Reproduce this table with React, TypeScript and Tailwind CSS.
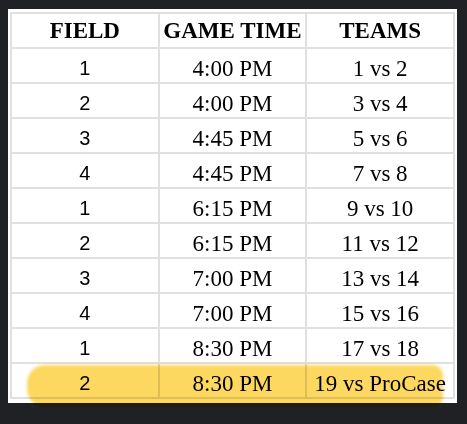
import React from "react";

const rows: [string, string, string][] = [
  ["1", "4:00 PM", "1 vs 2"],
  ["2", "4:00 PM", "3 vs 4"],
  ["3", "4:45 PM", "5 vs 6"],
  ["4", "4:45 PM", "7 vs 8"],
  ["1", "6:15 PM", "9 vs 10"],
  ["2", "6:15 PM", "11 vs 12"],
  ["3", "7:00 PM", "13 vs 14"],
  ["4", "7:00 PM", "15 vs 16"],
  ["1", "8:30 PM", "17 vs 18"],
  ["2", "8:30 PM", "19 vs ProCase"],
];

const App: React.FC = () => {
  return (
    <div className="w-[467px] h-[424px] bg-[#202124] pt-[9px] pl-[8px] overflow-hidden">
      <div className="relative w-[449px] h-[394px] bg-white pt-[3px] pl-[2px]">
        <table className="w-[445px] border-collapse table-fixed text-black">
          <thead>
            <tr className="h-[35px]">
              {["FIELD", "GAME TIME", "TEAMS"].map((h) => (
                <th
                  key={h}
                  className="border-2 border-[#e0e0e0] text-[23px] font-bold leading-none font-['Liberation_Serif',serif]"
                >
                  {h}
                </th>
              ))}
            </tr>
          </thead>
          <tbody>
            {rows.map(([field, time, teams], i) => (
              <tr key={i} className="h-[35px]">
                <td className="border-2 border-[#e0e0e0] pt-[5px] text-center text-[20px] leading-none font-['Liberation_Sans',sans-serif]">
                  {field}
                </td>
                <td className="border-2 border-[#e0e0e0] pt-[5px] text-center text-[23px] leading-none font-['Liberation_Serif',serif]">
                  {time}
                </td>
                <td className="border-2 border-[#e0e0e0] pt-[5px] text-center text-[23px] leading-none font-['Liberation_Serif',serif]">
                  {teams}
                </td>
              </tr>
            ))}
          </tbody>
        </table>

        {/* marker highlight over the last row */}
        <div className="absolute left-[19px] top-[356px] w-[416px] h-[42px] rounded-l-[18px] rounded-r-[10px] bg-[#fdd44f] opacity-90 mix-blend-multiply blur-[1.5px]" />
      </div>
    </div>
  );
};

export default App;
